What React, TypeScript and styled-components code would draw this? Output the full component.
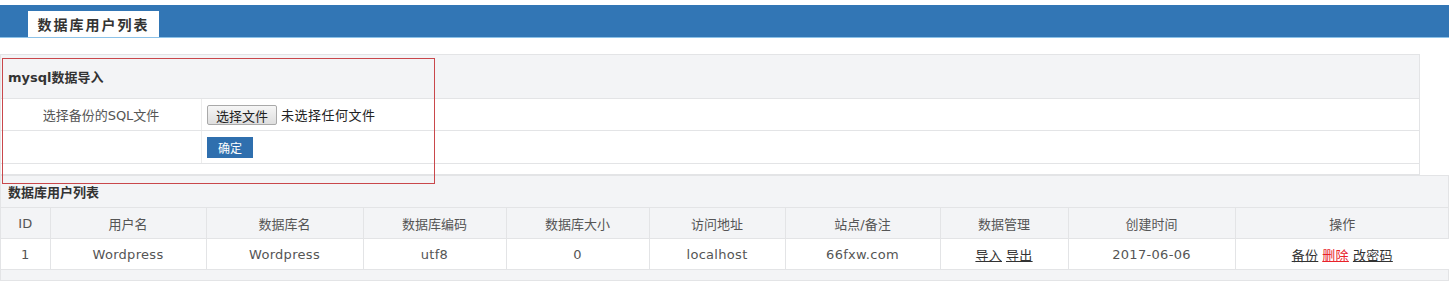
import React from "react";
import styled, { createGlobalStyle } from "styled-components";

const GlobalStyle = createGlobalStyle`
  html, body {
    margin: 0;
    padding: 0;
    background: #ffffff;
  }
  body {
    font-family: "DejaVu Sans", "Noto Sans CJK SC", sans-serif;
    font-size: 13px;
    color: #555;
  }
`;

const columns = [
  { title: "ID", width: 49 },
  { title: "用户名", width: 156 },
  { title: "数据库名", width: 157 },
  { title: "数据库编码", width: 143 },
  { title: "数据库大小", width: 143 },
  { title: "访问地址", width: 136 },
  { title: "站点/备注", width: 155 },
  { title: "数据管理", width: 128 },
  { title: "创建时间", width: 167 },
  { title: "操作", width: 214 },
];

const Page = styled.div`
  position: relative;
  width: 1454px;
  padding-top: 5px;
`;

const TopBar = styled.div`
  width: 1449px;
  height: 33px;
  box-sizing: border-box;
  background: #3276b5;
  border-bottom: 1px solid #8cc2e8;
  display: flex;
  align-items: flex-end;
  padding-left: 28px;
`;

const Tab = styled.div`
  width: 131px;
  height: 26px;
  background: #fff;
  display: flex;
  align-items: center;
  justify-content: center;
  font-family: "Noto Sans CJK SC", sans-serif;
  font-size: 14px;
  font-weight: bold;
  color: #333;
  letter-spacing: 2px;
`;

const Panel = styled.div<{ $width: number }>`
  width: ${(p) => p.$width}px;
  box-sizing: border-box;
  background: #f3f4f6;
  border: 1px solid #e3e4e6;
`;

const PanelHead = styled.div<{ $height: number }>`
  height: ${(p) => p.$height}px;
  display: flex;
  align-items: center;
  padding-left: 7px;
  font-weight: bold;
  color: #333;
  border-bottom: 1px solid #e3e4e6;
`;

const FormBody = styled.div`
  background: #fff;
  padding-bottom: 10px;
`;

const FormRow = styled.div<{ $height: number }>`
  display: grid;
  grid-template-columns: 201px 1fr;
  height: ${(p) => p.$height}px;
  border-bottom: 1px solid #e3e4e6;
`;

const FormLabel = styled.div`
  display: flex;
  align-items: center;
  justify-content: center;
  border-right: 1px solid #ececec;
  color: #555;
`;

const FormField = styled.div`
  display: flex;
  align-items: center;
  gap: 4px;
  padding-left: 5px;
  color: #333;
`;

const FileButton = styled.button`
  height: 20px;
  width: 70px;
  padding: 0;
  font-family: "Noto Sans CJK SC", sans-serif;
  font-size: 13px;
  color: #222;
  border: 1px solid #a9a9a9;
  border-radius: 2px;
  background: linear-gradient(#f6f6f6, #dedede);
`;

const FileName = styled.span`
  font-family: "Noto Sans CJK SC", sans-serif;
  font-size: 13px;
  color: #222;
  letter-spacing: 0.5px;
`;

const SubmitButton = styled.button`
  height: 21px;
  width: 46px;
  padding: 0;
  border: none;
  background: #2f6fae;
  color: #fff;
  font-family: "Noto Sans CJK SC", sans-serif;
  font-size: 12px;
`;

const Table = styled.table`
  border-collapse: collapse;
  table-layout: fixed;
  width: 100%;
`;

const Th = styled.th`
  height: 30px;
  padding: 0;
  font-weight: normal;
  color: #555;
  text-align: center;
  border-right: 1px solid #e3e4e6;
  border-bottom: 1px solid #e3e4e6;
  &:last-child {
    border-right: none;
  }
`;

const Td = styled.td`
  height: 30px;
  padding: 0;
  background: #fff;
  color: #555;
  text-align: center;
  letter-spacing: 0.3px;
  border-right: 1px solid #e3e4e6;
  border-bottom: 1px solid #e3e4e6;
  &:last-child {
    border-right: none;
  }
`;

const Link = styled.a<{ $danger?: boolean }>`
  color: ${(p) => (p.$danger ? "#e8222a" : "#333")};
  text-decoration: underline;
  margin: 0 2px;
  cursor: pointer;
`;

const TableFoot = styled.div`
  height: 10px;
`;

const Highlight = styled.div`
  position: absolute;
  left: 2px;
  top: 58px;
  width: 431px;
  height: 124px;
  border: 1px solid #c9474b;
  pointer-events: none;
`;

const Gap = styled.div`
  height: 16px;
`;

export default function App() {
  return (
    <>
      <GlobalStyle />
      <Page>
        <TopBar>
          <Tab>数据库用户列表</Tab>
        </TopBar>
        <Gap />
        <Panel $width={1420}>
          <PanelHead $height={43}>mysql数据导入</PanelHead>
          <FormBody>
            <FormRow $height={31}>
              <FormLabel>选择备份的SQL文件</FormLabel>
              <FormField>
                <FileButton>选择文件</FileButton>
                <FileName>未选择任何文件</FileName>
              </FormField>
            </FormRow>
            <FormRow $height={32}>
              <FormLabel />
              <FormField>
                <SubmitButton>确定</SubmitButton>
              </FormField>
            </FormRow>
          </FormBody>
        </Panel>
        <Panel $width={1449}>
          <PanelHead $height={31}>数据库用户列表</PanelHead>
          <Table>
            <colgroup>
              {columns.map((c) => (
                <col key={c.title} style={{ width: c.width }} />
              ))}
            </colgroup>
            <thead>
              <tr>
                {columns.map((c) => (
                  <Th key={c.title}>{c.title}</Th>
                ))}
              </tr>
            </thead>
            <tbody>
              <tr>
                <Td>1</Td>
                <Td>Wordpress</Td>
                <Td>Wordpress</Td>
                <Td>utf8</Td>
                <Td>0</Td>
                <Td>localhost</Td>
                <Td>66fxw.com</Td>
                <Td>
                  <Link>导入</Link>
                  <Link>导出</Link>
                </Td>
                <Td>2017-06-06</Td>
                <Td>
                  <Link>备份</Link>
                  <Link $danger>删除</Link>
                  <Link>改密码</Link>
                </Td>
              </tr>
            </tbody>
          </Table>
          <TableFoot />
        </Panel>
        <Highlight />
      </Page>
    </>
  );
}
